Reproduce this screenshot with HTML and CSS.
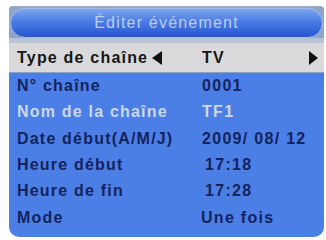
FILE: index.html
```html
<!DOCTYPE html>
<html lang="fr">
<head>
<meta charset="utf-8">
<title>Éditer événement</title>
<link rel="stylesheet" href="styles.css">
</head>
<body>
<div class="panel">
  <div class="header"><div class="pill">Éditer événement</div></div>
  <div class="sep"></div>
  <div class="row sel">
    <span class="label">Type de chaîne</span>
    <span class="arrow"><svg width="10" height="14" viewBox="0 0 10 14"><polygon points="10,0 10,14 0,7" fill="#111"/></svg></span>
    <span class="value">TV</span>
    <span class="arrow r"><svg width="9" height="14" viewBox="0 0 9 14"><polygon points="0,0 9,7 0,14" fill="#111"/></svg></span>
  </div>
  <div class="row"><span class="label wide">N° chaîne</span><span class="value">0001</span></div>
  <div class="row dis"><span class="label wide">Nom de la chaîne</span><span class="value">TF1</span></div>
  <div class="row"><span class="label wide">Date début(A/M/J)</span><span class="value">2009/ 08/ 12</span></div>
  <div class="row"><span class="label wide">Heure début</span><span class="value v2">17:18</span></div>
  <div class="row"><span class="label wide">Heure de fin</span><span class="value v2">17:28</span></div>
  <div class="row"><span class="label wide">Mode</span><span class="value v0">Une fois</span></div>
</div>
</body>
</html>
```
FILE: styles.css
```css
html, body { margin: 0; padding: 0; background: #fff; }
body { width: 326px; height: 240px; overflow: hidden; font-family: "Liberation Sans", Arial, sans-serif; }
.panel {
  margin: 6px 0 0 9px;
  width: 315px;
  height: 231px;
  background: #4b7fe5;
  border-radius: 4px 4px 10px 10px;
  overflow: hidden;
  border-top: 1px solid #9aaed4;
  box-sizing: border-box;
}
.header { padding: 1px 1px 0 1px; background: #8fa4cc; }
.pill {
  height: 30px;
  border-radius: 15px;
  border: 1px solid #a9bbe0;
  background: linear-gradient(#7ea6ef 0%, #4f80e6 40%, #2f60d6 85%, #2a55c4 100%);
  color: #bccdef;
  font-size: 16px;
  letter-spacing: 1.2px;
  display: flex;
  align-items: center;
  justify-content: center;
  box-sizing: border-box;
}
.sep { height: 5px; background: #b9c3d6; }
.row {
  display: grid;
  grid-template-columns: 135px 50px 1fr 9px;
  align-items: center;
  height: 26.3px;
  padding: 0 6px 0 8px;
  font-size: 16px;
  font-weight: bold;
  letter-spacing: 1.2px;
  color: #13235e;
}
.row.sel {
  height: 29px;
  background: #d9d9dc;
  color: #161616;
  border-bottom: 1px solid #8e9ec4;
}
.row.dis { color: #cdd7f2; }
.label { white-space: nowrap; }
.label.wide { grid-column: 1 / 3; }
.value { grid-column: 3; white-space: nowrap; letter-spacing: 1.3px; }
.value.v2 { padding-left: 3px; }
.value.v0 { margin-left: -1px; }
.arrow { display: flex; align-items: center; }
.arrow.r { grid-column: 4; }
```
